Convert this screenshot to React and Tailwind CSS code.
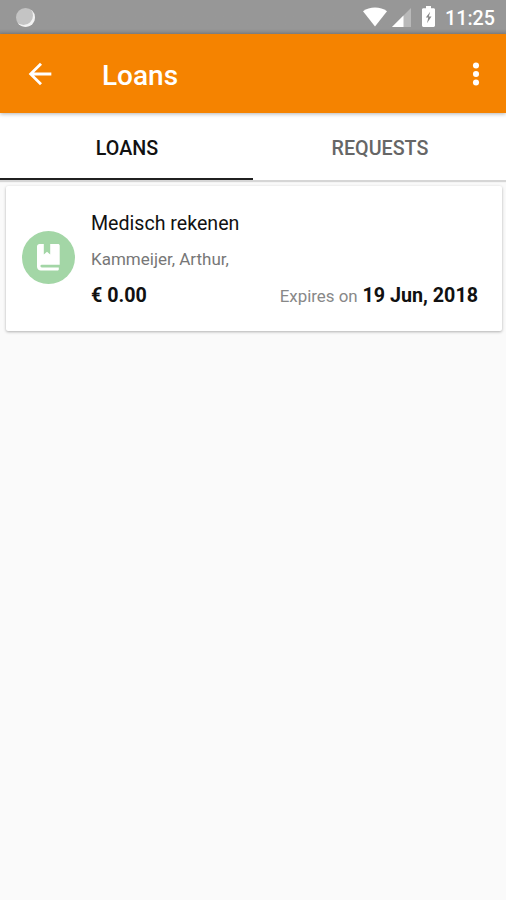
function WifiIcon() {
  return (
    <svg width="24" height="20" viewBox="0 0 24 20" fill="#fff">
      <path d="M12 19.400 0 4.200C3.400 1.600 7.400.4 12 .4s8.600 1.200 12 3.800Z" />
    </svg>
  );
}

function SignalIcon() {
  return (
    <svg width="19" height="19" viewBox="0 0 19 19">
      <path d="M19 0v19H0Z" fill="#b9b9b9" />
      <path d="M11.500 7.500V19H0Z" fill="#fff" />
    </svg>
  );
}

function BatteryIcon() {
  return (
    <svg width="13" height="21" viewBox="0 0 13 21">
      <path d="M4 0h5v2.200h2.600c.8 0 1.400.6 1.400 1.400v16c0 .8-.6 1.400-1.400 1.400H1.400C.6 21 0 20.400 0 19.600v-16c0-.8.6-1.400 1.400-1.400H4Z" fill="#fff" />
      <path d="M8.200 5.800 3.800 11.600h2.500L5 17.200l4.500-6.600H6.800Z" fill="#888" />
    </svg>
  );
}

function StatusBar() {
  return (
    <header className="flex h-[34px] shrink-0 items-start bg-[#969696] bg-linear-to-b from-[#979797] from-85% to-[#878787] pl-4 pr-[11px]">
      <div className="mt-[8px] size-[19px] rounded-full bg-[#c4c4c4] shadow-[inset_-2px_-2px_0_#f2f2f2]" />
      <div className="ml-auto mt-[7px] mr-[5px]"><WifiIcon /></div>
      <div className="mt-[8px] mr-[11px]"><SignalIcon /></div>
      <div className="mt-[6px] mr-[10px]"><BatteryIcon /></div>
      <span className="mt-[7px] text-[19.700px] leading-6 font-medium text-white">11:25</span>
    </header>
  );
}

function AppBar() {
  return (
    <div className="z-10 flex h-[79px] shrink-0 items-center bg-[#f58300] pl-[23px] pr-[13px] text-white shadow-[0_1px_4px_rgba(0,0,0,0.3)]">
      <svg width="34" height="34" viewBox="0 0 24 24" fill="#fff">
        <path d="M20 11H7.830l5.590-5.590L12 4l-8 8 8 8 1.410-1.410L7.830 13H20v-2z" />
      </svg>
      <h1 className="ml-[45px] mt-[5px] text-[28px] leading-8 font-medium">Loans</h1>
      <svg className="ml-auto" width="34" height="34" viewBox="0 0 24 24" fill="#fff">
        <circle cx="12" cy="6" r="2.150" />
        <circle cx="12" cy="12" r="2.150" />
        <circle cx="12" cy="18" r="2.150" />
      </svg>
    </div>
  );
}

function Tabs() {
  return (
    <nav className="flex h-[67px] shrink-0 bg-white text-[19.700px] leading-6 font-medium shadow-[0_2px_1px_rgba(0,0,0,0.14)]">
      <button className="flex flex-1 justify-center border-b-[2px] border-[#202020] pl-px pt-[24px] text-[#111]">LOANS</button>
      <button className="flex flex-1 justify-center pl-px pt-[24px] text-[#666]">REQUESTS</button>
    </nav>
  );
}

function LoanCard() {
  return (
    <article className="ml-[6px] mt-[6px] flex h-[145px] w-[496px] rounded-[2px] bg-white pl-4 pr-6 shadow-[0_1px_3px_rgba(0,0,0,0.3)]">
      <div className="mt-[45px] flex size-[53px] shrink-0 items-center justify-center rounded-full bg-[#a3d6a6]">
        <svg width="23" height="27" viewBox="0 0 23 27" fill="#fff">
          <path d="M2.500 0h4.300v10.500l3.200-2.700 3.200 2.700V0H21c1 0 1.700.7 1.700 1.700v19H4.800a1.400 1.400 0 0 0 0 2.800h17v1.700c0 .8-.6 1.400-1.400 1.400H3.800C1.700 26.600 0 25 0 22.800V2.500C0 1.100 1.100 0 2.500 0Z" />
        </svg>
      </div>
      <div className="ml-4 flex flex-1 flex-col">
        <h2 className="mt-[26px] text-[19.600px] leading-6 text-[#111]">Medisch rekenen</h2>
        <p className="mt-[13px] text-[17px] leading-5 text-[#777]">Kammeijer, Arthur,</p>
        <div className="mt-[15px] flex items-baseline justify-between text-[19.700px] leading-6 font-bold text-[#111]">
          <span>€ 0.00</span>
          <span><span className="text-[16.900px] font-normal text-[#888]">Expires on</span> 19 Jun, 2018</span>
        </div>
      </div>
    </article>
  );
}

export default function App() {
  return (
    <main className="flex h-[900px] w-[506px] flex-col overflow-hidden bg-[#fafafa] font-['Roboto',sans-serif]">
      <StatusBar />
      <AppBar />
      <Tabs />
      <LoanCard />
    </main>
  );
}
